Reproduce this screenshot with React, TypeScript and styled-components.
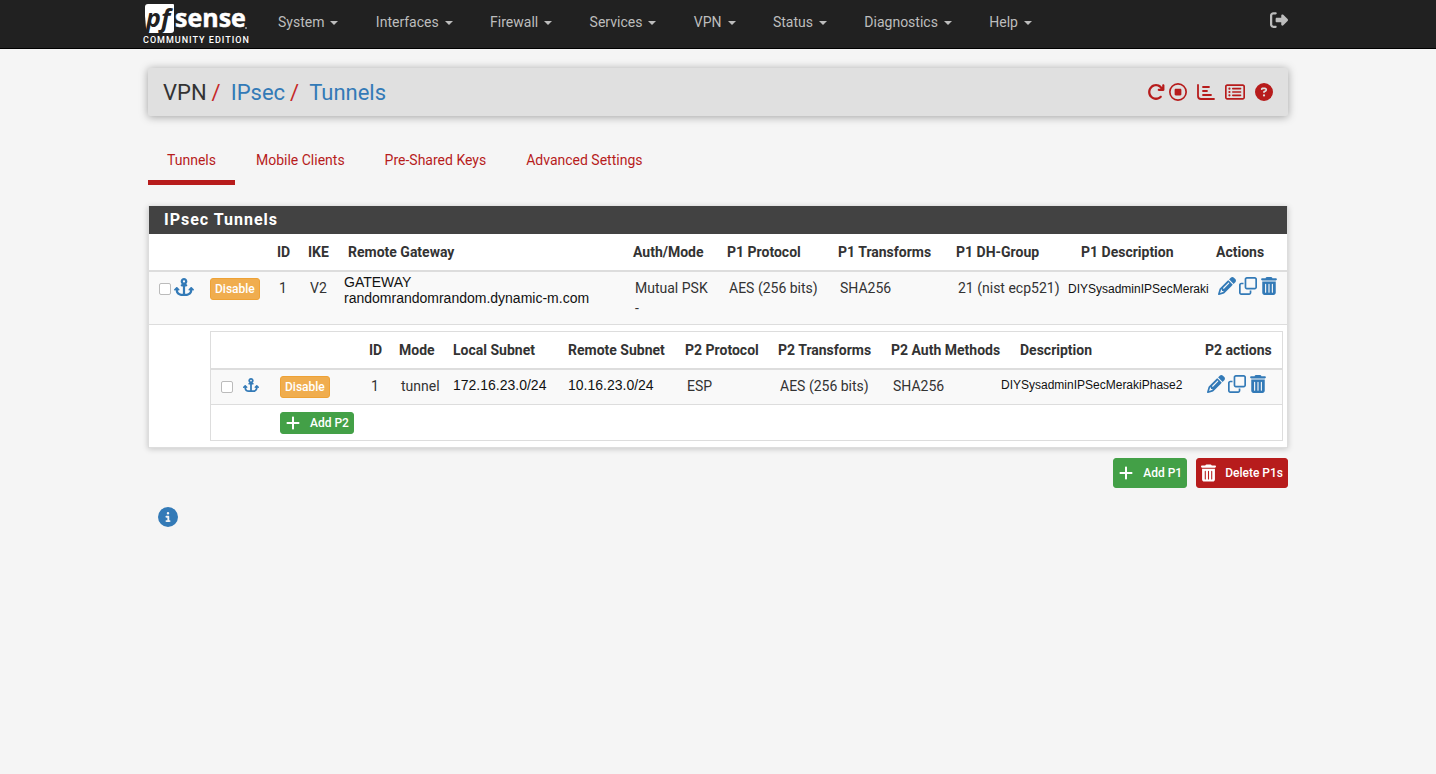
import React from "react";
import styled, { createGlobalStyle } from "styled-components";
import {
  FaAnchor,
  FaArrowRotateRight,
  FaCircleInfo,
  FaCircleQuestion,
  FaPencil,
  FaPlus,
  FaRegCircleStop,
  FaRegClone,
  FaRegRectangleList,
  FaRightFromBracket,
  FaTrashCan,
} from "react-icons/fa6";

const GlobalStyle = createGlobalStyle`
  *, *::before, *::after { box-sizing: border-box; }
  body {
    margin: 0;
    background: #f5f5f5;
    color: #333;
    font: 14px/20px Roboto, "Liberation Sans", sans-serif;
  }
  button, input { font: inherit; }
  svg { display: block; flex: none; overflow: visible; }
`;

const Navbar = styled.nav`
  background: #212121;
  border-bottom: 1px solid #000;
`;

const Container = styled.div`
  max-width: 1170px;
  margin: 0 auto;
  padding: 0 15px;
`;

const NavInner = styled(Container)`
  display: flex;
  align-items: flex-start;
  justify-content: space-between;
  height: 48px;
  padding-left: 10px;
`;

const Brand = styled.a`
  display: flex;
  flex-direction: column;
  flex: none;
  width: 117px;
  padding-top: 4px;
  color: #fff;
  text-decoration: none;
`;

const BrandEdition = styled.span`
  font-size: 9px;
  font-weight: 500;
  line-height: 10px;
  letter-spacing: 1px;
  white-space: nowrap;
`;

const Menu = styled.ul`
  display: flex;
  flex: 0 1 790px;
  justify-content: space-between;
  margin: 0 auto 0 0;
  padding: 0;
  list-style: none;
`;

const MenuButton = styled.button`
  display: flex;
  align-items: center;
  gap: 6px;
  height: 44px;
  padding: 0 18px;
  border: 0;
  background: none;
  color: #bdbdbd;
  cursor: pointer;
  &::after {
    content: "";
    border: 4px solid transparent;
    border-top-color: currentColor;
    border-bottom: 0;
    margin-top: 2px;
  }
`;

const Logout = styled.a`
  display: flex;
  align-items: center;
  height: 40px;
  color: #bdbdbd;
`;

const Header = styled.header`
  display: flex;
  align-items: center;
  justify-content: space-between;
  height: 48px;
  margin-top: 19px;
  padding: 0 15px;
  background: #e0e0e0;
  border-radius: 2px;
  box-shadow: 0 1px 8px rgba(0, 0, 0, 0.35);
`;

const Crumbs = styled.ol`
  display: flex;
  margin: 0;
  padding: 2px 0 0;
  list-style: none;
  font-size: 22px;
  line-height: 24px;
`;

const Crumb = styled.li`
  & + &::before {
    content: "/";
    padding: 0 10px 0 5px;
    color: #c62828;
  }
`;

const CrumbLink = styled.a`
  color: #337ab7;
  text-decoration: none;
`;

const Shortcuts = styled.div`
  display: flex;
  align-items: center;
  gap: 10px;
`;

const ShortcutPair = styled.div`
  display: flex;
  align-items: center;
  gap: 4px;
`;

const Shortcut = styled.a`
  display: flex;
  color: #b71c1c;
`;

const Tabs = styled.nav`
  display: flex;
  gap: 2px;
  margin: 20px 0 21px;
`;

const Tab = styled.a<{ $active?: boolean }>`
  padding: 14px 19px 10px;
  border-bottom: 5px solid ${(p) => (p.$active ? "#b71c1c" : "transparent")};
  color: #b71c1c;
  text-decoration: none;
`;

const Panel = styled.section`
  background: #fff;
  border: 1px solid #ddd;
  border-top: 0;
  box-shadow: 0 1px 6px rgba(0, 0, 0, 0.2);
`;

const PanelTitle = styled.h2`
  margin: 0;
  padding: 4px 15px;
  background: #424242;
  color: #fff;
  font-size: 16px;
  font-weight: 700;
  line-height: 20px;
  letter-spacing: 1px;
`;

const Table = styled.table<{ $nested?: boolean }>`
  width: 100%;
  table-layout: fixed;
  border-collapse: separate;
  border-spacing: 0;
  border: ${(p) => (p.$nested ? "1px solid #ddd" : "0")};
`;

const Th = styled.th<{ $indent?: number }>`
  padding: 8px 0 8px ${(p) => p.$indent ?? 5}px;
  border-bottom: 2px solid #ddd;
  font-weight: 700;
  text-align: left;
  white-space: nowrap;
`;

const Td = styled.td<{ $indent?: number; $top?: number }>`
  padding: ${(p) => p.$top ?? 6}px 0 6px ${(p) => p.$indent ?? 7}px;
  border-bottom: 1px solid #ddd;
  background: #f9f9f9;
  vertical-align: top;
  white-space: nowrap;
`;

const PlainTd = styled.td<{ $pad?: string }>`
  padding: ${(p) => p.$pad ?? "0"};
`;

const Plain = styled.div<{ $size: number }>`
  color: #111;
  font-family: "Liberation Sans", Arial, sans-serif;
  font-size: ${(p) => p.$size}px;
  line-height: 16px;
`;

const IconRow = styled.div<{ $gap: number }>`
  display: flex;
  align-items: center;
  gap: ${(p) => p.$gap}px;
`;

const IconLink = styled.a`
  display: flex;
  color: #337ab7;
`;

const Check = styled.input`
  appearance: none;
  width: 12px;
  height: 12px;
  margin: 4px 0 0;
  border: 1px solid #bbb;
  border-radius: 2px;
  background: #fff;
`;

const buttonColors = {
  warning: ["#f0ad4e", "#eea236"],
  success: ["#43a047", "#43a047"],
  danger: ["#b71c1c", "#b71c1c"],
};

const Button = styled.button<{ $kind: keyof typeof buttonColors; $large?: boolean }>`
  display: inline-flex;
  align-items: center;
  gap: 9px;
  height: ${(p) => (p.$large ? 30 : 22)}px;
  padding: 0 4px;
  border: 1px solid ${(p) => buttonColors[p.$kind][1]};
  border-radius: 3px;
  background: ${(p) => buttonColors[p.$kind][0]};
  color: #fff;
  font-size: 12px;
  font-weight: 500;
  line-height: 18px;
  vertical-align: top;
  cursor: pointer;
`;

const ButtonTrash = styled(FaTrashCan)`
  width: 15px;
  height: 18px;
`;

const ButtonBar = styled.div`
  display: flex;
  justify-content: flex-end;
  gap: 9px;
  margin-top: 10px;
`;

const InfoButton = styled.button`
  display: flex;
  margin: 19px 0 0 10px;
  padding: 0;
  border: 0;
  background: none;
  color: #337ab7;
  cursor: pointer;
`;

function Logo() {
  return (
    <svg width="106" height="31" viewBox="0 0 106 31" role="img" aria-label="pfsense">
      <path d="M5 0H30Q31 0 31 1V26Q31 29 28 29H5L3 24L2 12V3Q2 0 5 0Z" fill="#fff" />
      <g fontFamily="Open Sans, Liberation Sans, sans-serif" fontWeight="700">
        <text x="3" y="23" fontSize="25" fontStyle="italic" fill="#212121">pf</text>
        <text x="32" y="23" fontSize="25" fill="#fff" stroke="#fff" strokeWidth="0.5">sense</text>
      </g>
      <circle cx="103" cy="24" r="1" fill="#aaa" />
    </svg>
  );
}

function ChartIcon() {
  return (
    <svg width="18" height="18" viewBox="0 0 18 18" fill="none" stroke="currentColor" strokeLinecap="round">
      <path d="M1 2V13Q1 16 4 16H17M6 4H12M6 8H10M6 12H14" strokeWidth="1.8" />
    </svg>
  );
}

function RowActions() {
  return (
    <IconRow $gap={3}>
      <IconLink href="#edit" aria-label="Edit"><FaPencil size={18} /></IconLink>
      <IconLink href="#copy" aria-label="Copy"><FaRegClone size={18} /></IconLink>
      <IconLink href="#delete" aria-label="Delete"><FaTrashCan size={18} /></IconLink>
    </IconRow>
  );
}

function Columns({ widths }: { widths: (number | null)[] }) {
  return (
    <colgroup>
      {widths.map((w, i) => (
        <col key={i} width={w ?? undefined} />
      ))}
    </colgroup>
  );
}

const menus = ["System", "Interfaces", "Firewall", "Services", "VPN", "Status", "Diagnostics", "Help"];
const tabs = ["Tunnels", "Mobile Clients", "Pre-Shared Keys", "Advanced Settings"];

function Phase2Table() {
  return (
    <Table $nested>
      <Columns widths={[64, 89, 30, 54, 115, 117, 93, 113, 110, null, 82]} />
      <thead>
        <tr>
          <Th /><Th />
          <Th>ID</Th>
          <Th>Mode</Th>
          <Th>Local Subnet</Th>
          <Th>Remote Subnet</Th>
          <Th>P2 Protocol</Th>
          <Th>P2 Transforms</Th>
          <Th>P2 Auth Methods</Th>
          <Th $indent={24}>Description</Th>
          <Th>P2 actions</Th>
        </tr>
      </thead>
      <tbody>
        <tr>
          <Td $indent={10} $top={7}>
            <IconRow $gap={10}>
              <Check type="checkbox" aria-label="Select phase 2 entry" />
              <IconLink href="#move-p2" aria-label="Move phase 2 entry"><FaAnchor size={16} /></IconLink>
            </IconRow>
          </Td>
          <Td $indent={5}><Button $kind="warning">Disable</Button></Td>
          <Td>1</Td>
          <Td>tunnel</Td>
          <Td $indent={5} $top={7}><Plain $size={14}>172.16.23.0/24</Plain></Td>
          <Td $indent={5} $top={7}><Plain $size={14}>10.16.23.0/24</Plain></Td>
          <Td>ESP</Td>
          <Td>AES (256 bits)</Td>
          <Td>SHA256</Td>
          <Td $indent={5} $top={7}><Plain $size={12}>DIYSysadminIPSecMerakiPhase2</Plain></Td>
          <Td $top={5}><RowActions /></Td>
        </tr>
        <tr>
          <PlainTd />
          <PlainTd colSpan={10} $pad="7px 5px 6px">
            <Button $kind="success"><FaPlus size={16} />Add P2</Button>
          </PlainTd>
        </tr>
      </tbody>
    </Table>
  );
}

function Phase1Table() {
  return (
    <Table>
      <Columns widths={[56, 67, 31, 36, null, 94, 111, 118, 112, 148, 76]} />
      <thead>
        <tr>
          <Th /><Th />
          <Th>ID</Th>
          <Th>IKE</Th>
          <Th $indent={9}>Remote Gateway</Th>
          <Th>Auth/Mode</Th>
          <Th>P1 Protocol</Th>
          <Th>P1 Transforms</Th>
          <Th>P1 DH-Group</Th>
          <Th $indent={18}>P1 Description</Th>
          <Th>Actions</Th>
        </tr>
      </thead>
      <tbody>
        <tr>
          <Td $indent={10} $top={5}>
            <IconRow $gap={3}>
              <Check type="checkbox" aria-label="Select phase 1 entry" />
              <IconLink href="#move-p1" aria-label="Move phase 1 entry"><FaAnchor size={20} /></IconLink>
            </IconRow>
          </Td>
          <Td $indent={5}><Button $kind="warning">Disable</Button></Td>
          <Td>1</Td>
          <Td>V2</Td>
          <Td $indent={5} $top={2}>
            <Plain $size={14}>GATEWAY<br />randomrandomrandom.dynamic-m.com</Plain>
          </Td>
          <Td>Mutual PSK<br />-</Td>
          <Td>AES (256 bits)</Td>
          <Td>SHA256</Td>
          <Td>21 (nist ecp521)</Td>
          <Td $indent={5} $top={9}><Plain $size={12}>DIYSysadminIPSecMeraki</Plain></Td>
          <Td $top={5}><RowActions /></Td>
        </tr>
        <tr>
          <PlainTd />
          <PlainTd colSpan={10} $pad="6px 4px 6px 5px"><Phase2Table /></PlainTd>
        </tr>
      </tbody>
    </Table>
  );
}

export default function App() {
  return (
    <>
      <GlobalStyle />
      <Navbar>
        <NavInner>
          <Brand href="#home">
            <Logo />
            <BrandEdition>COMMUNITY EDITION</BrandEdition>
          </Brand>
          <Menu>
            {menus.map((m) => (
              <li key={m}><MenuButton type="button">{m}</MenuButton></li>
            ))}
          </Menu>
          <Logout href="#logout" aria-label="Log out"><FaRightFromBracket size={18} /></Logout>
        </NavInner>
      </Navbar>
      <Container>
        <Header>
          <Crumbs>
            <Crumb>VPN</Crumb>
            <Crumb><CrumbLink href="#ipsec">IPsec</CrumbLink></Crumb>
            <Crumb><CrumbLink href="#tunnels">Tunnels</CrumbLink></Crumb>
          </Crumbs>
          <Shortcuts>
            <ShortcutPair>
              <Shortcut href="#restart" aria-label="Restart service"><FaArrowRotateRight size={18} /></Shortcut>
              <Shortcut href="#stop" aria-label="Stop service"><FaRegCircleStop size={18} /></Shortcut>
            </ShortcutPair>
            <Shortcut href="#status" aria-label="Status"><ChartIcon /></Shortcut>
            <Shortcut href="#log" aria-label="Log"><FaRegRectangleList size={20} /></Shortcut>
            <Shortcut href="#help" aria-label="Help"><FaCircleQuestion size={18} /></Shortcut>
          </Shortcuts>
        </Header>
        <Tabs>
          {tabs.map((t, i) => (
            <Tab key={t} href={"#tab" + i} $active={i === 0}>{t}</Tab>
          ))}
        </Tabs>
        <Panel>
          <PanelTitle>IPsec Tunnels</PanelTitle>
          <Phase1Table />
        </Panel>
        <ButtonBar>
          <Button $kind="success" $large><FaPlus size={16} />Add P1</Button>
          <Button $kind="danger" $large><ButtonTrash />Delete P1s</Button>
        </ButtonBar>
        <InfoButton type="button" aria-label="Information"><FaCircleInfo size={20} /></InfoButton>
      </Container>
    </>
  );
}
